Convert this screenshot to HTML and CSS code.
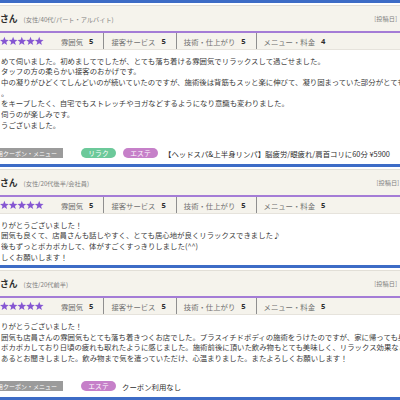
FILE: index.html
```html
<!DOCTYPE html>
<html lang="ja">
<head>
<meta charset="utf-8">
<title>口コミ</title>
<link rel="stylesheet" href="styles.css">
</head>
<body>
<svg class="defs" width="0" height="0" aria-hidden="true">
  <defs>
    <polygon id="st" points="0,-4.6 1.15,-1.58 4.38,-1.42 1.86,0.6 2.7,3.72 0,1.95 -2.7,3.72 -1.86,0.6 -4.38,-1.42 -1.15,-1.58"/>
  </defs>
</svg>
<div class="list">

  <section class="review">
    <div class="head">
      <div class="who"><span class="name">さん</span><span class="meta">(女性/40代/パート・アルバイト)</span></div>
      <span class="date">[投稿日]</span>
    </div>
    <div class="rating">
      <svg class="stars" viewBox="0 0 44 10" width="44" height="10"><use href="#st" x="4.4" y="5.3"/><use href="#st" x="13.1" y="5.3"/><use href="#st" x="21.8" y="5.3"/><use href="#st" x="30.5" y="5.3"/><use href="#st" x="39.2" y="5.3"/></svg>
      <ul class="scores">
        <li><span class="lbl">雰囲気</span><b>5</b></li>
        <li><span class="lbl">接客サービス</span><b>5</b></li>
        <li><span class="lbl">技術・仕上がり</span><b>5</b></li>
        <li><span class="lbl">メニュー・料金</span><b>4</b></li>
      </ul>
    </div>
    <div class="body">
      <p>めて伺いました。初めましてでしたが、とても落ち着ける雰囲気でリラックスして過ごせました。</p>
      <p>タッフの方の柔らかい接客のおかげです。</p>
      <p>中の凝りがひどくてしんどいのが続いていたのですが、施術後は背筋もスッと楽に伸びて、凝り固まっていた部分がとても</p>
      <p>。</p>
      <p>をキープしたく、自宅でもストレッチやヨガなどするようになり意識も変わりました。</p>
      <p>伺うのが楽しみです。</p>
      <p>うございました。</p>
    </div>
    <div class="coupon">
      <span class="clabel"><span>用クーポン・メニュー</span></span>
      <span class="tag green">リラク</span>
      <span class="tag pink">エステ</span>
      <span class="ctext">【ヘッドスパ&amp;上半身リンパ】脳疲労/眼疲れ/肩首コリに60分 ¥5900</span>
    </div>
  </section>

  <section class="review">
    <div class="head">
      <div class="who"><span class="name">さん</span><span class="meta">(女性/20代後半/会社員)</span></div>
      <span class="date long">[投稿日] 2</span>
    </div>
    <div class="rating">
      <svg class="stars" viewBox="0 0 44 10" width="44" height="10"><use href="#st" x="4.4" y="5.3"/><use href="#st" x="13.1" y="5.3"/><use href="#st" x="21.8" y="5.3"/><use href="#st" x="30.5" y="5.3"/><use href="#st" x="39.2" y="5.3"/></svg>
      <ul class="scores">
        <li><span class="lbl">雰囲気</span><b>5</b></li>
        <li><span class="lbl">接客サービス</span><b>5</b></li>
        <li><span class="lbl">技術・仕上がり</span><b>5</b></li>
        <li><span class="lbl">メニュー・料金</span><b>5</b></li>
      </ul>
    </div>
    <div class="body">
      <p>りがとうございました！</p>
      <p>囲気も良くて、店員さんも話しやすく、とても居心地が良くリラックスできました♪</p>
      <p>後もずっとポカポカして、体がすごくすっきりしました(^^)</p>
      <p>しくお願いします！</p>
    </div>
  </section>

  <section class="review">
    <div class="head">
      <div class="who"><span class="name">さん</span><span class="meta">(女性/20代前半)</span></div>
      <span class="date">[投稿日]</span>
    </div>
    <div class="rating">
      <svg class="stars" viewBox="0 0 44 10" width="44" height="10"><use href="#st" x="4.4" y="5.3"/><use href="#st" x="13.1" y="5.3"/><use href="#st" x="21.8" y="5.3"/><use href="#st" x="30.5" y="5.3"/><use href="#st" x="39.2" y="5.3"/></svg>
      <ul class="scores">
        <li><span class="lbl">雰囲気</span><b>5</b></li>
        <li><span class="lbl">接客サービス</span><b>5</b></li>
        <li><span class="lbl">技術・仕上がり</span><b>5</b></li>
        <li><span class="lbl">メニュー・料金</span><b>5</b></li>
      </ul>
    </div>
    <div class="body">
      <p>りがとうございました！</p>
      <p>囲気も店員さんの雰囲気もとても落ち着きつくお店でした。プラスイチドボディの施術をうけたのですが、家に帰っても身体が</p>
      <p>ポカポカしており日頃の疲れも取れたように感じました。施術前後に頂いた飲み物もとても美味しく、リラックス効果などが</p>
      <p>あるとお聞きしました。飲み物まで気を遣っていただけ、心温まりました。またよろしくお願いします！</p>
    </div>
    <div class="coupon">
      <span class="clabel"><span>用クーポン・メニュー</span></span>
      <span class="tag pink">エステ</span>
      <span class="ctext">クーポン利用なし</span>
    </div>
  </section>

  <section class="review">
    <div class="head">
      <div class="who"><span class="name">さん</span></div>
    </div>
  </section>

</div>
</body>
</html>
```

FILE: styles.css
```css
html, body {
  margin: 0;
  padding: 0;
  background: #ffffff;
}
body {
  width: 400px;
  height: 400px;
  overflow: hidden;
  font-family: "Noto Sans CJK JP", "Noto Sans", sans-serif;
  color: #3a3a3a;
}
.defs {
  position: absolute;
  width: 0;
  height: 0;
}
.list {
  display: flex;
  flex-direction: column;
}
.review {
  border-top: 3px solid #3d6cc6;
  padding-top: 2px;
  background: #ffffff;
}
.head {
  height: 25px;
  border-top: 1px solid #e2dfd7;
  border-bottom: 2px solid #a47cd6;
  background: #f5f3ec;
  display: flex;
  align-items: center;
  justify-content: space-between;
  overflow: hidden;
}
.who {
  display: flex;
  align-items: baseline;
  white-space: nowrap;
}
.name {
  font-size: 8.8px;
  font-weight: bold;
  color: #2e2e2e;
}
.meta {
  font-size: 6.2px;
  color: #808080;
  margin-left: 6px;
}
.date {
  font-size: 6.2px;
  color: #808080;
  margin-right: 3px;
  white-space: nowrap;
}
.date.long {
  margin-right: -4px;
}
.rating {
  height: 16px;
  background: #f5f3ec;
  border-bottom: 1px solid #e6e3dc;
  display: flex;
  align-items: stretch;
}
.stars {
  align-self: center;
  fill: #8556d2;
  flex: none;
}
.scores {
  list-style: none;
  margin: 0 0 0 10px;
  padding: 0;
  display: flex;
  align-items: stretch;
}
.scores li {
  display: flex;
  align-items: center;
  padding: 0 10px 0 7px;
  border-right: 1px solid #8f8f8f;
  white-space: nowrap;
}
.scores li:last-child {
  border-right: none;
}
.lbl {
  font-size: 7.35px;
  color: #707070;
  margin-right: 6px;
}
.scores b {
  font-family: "Noto Sans", sans-serif;
  font-size: 7.6px;
  font-weight: bold;
  color: #2e2e2e;
}
.body {
  padding: 5.6px 0 3px 1px;
}
.body p {
  margin: 0;
  font-size: 7.4px;
  line-height: 10.7px;
  color: #3a3a3a;
  white-space: nowrap;
  overflow: hidden;
}
.coupon {
  display: flex;
  align-items: center;
  height: 10px;
  margin-top: 14.5px;
  padding-bottom: 6px;
  white-space: nowrap;
}
.clabel {
  width: 63px;
  height: 10px;
  background: #9b9b9b;
  color: #ffffff;
  font-size: 6px;
  display: flex;
  align-items: center;
  overflow: hidden;
  flex: none;
}
.clabel span {
  margin-left: -3px;
}
.tag {
  height: 10px;
  width: 35px;
  border-radius: 5px;
  color: #ffffff;
  font-size: 6.8px;
  display: flex;
  align-items: center;
  justify-content: center;
  flex: none;
}
.tag.green {
  background: #6cc99a;
  margin-left: 18px;
}
.tag.pink {
  background: #c680c9;
  margin-left: 7px;
}
.clabel + .tag.pink {
  margin-left: 18px;
}
.ctext {
  font-size: 7.4px;
  color: #2e2e2e;
  margin-left: 6px;
}
```
